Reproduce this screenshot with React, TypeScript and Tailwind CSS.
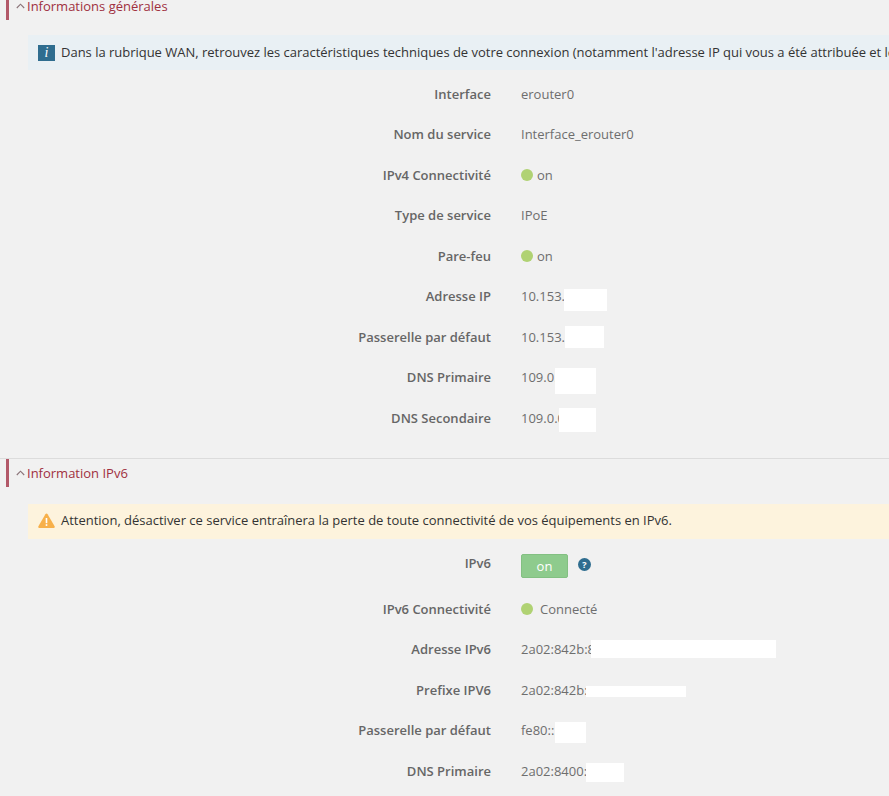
import React from "react";

type Mask = { left: number; width: number; top: number; height: number };

const Dot = () => <span className="inline-block w-3 h-3 rounded-full bg-[#b0d273]" />;

const SectionTitle = ({ title, className }: { title: string; className: string }) => (
  <div className={`flex items-center ml-1.5 border-l-[3px] border-[#b25868] pl-[7px] text-[13px] text-[#a0303f] ${className}`}>
    <svg width="9" height="6" viewBox="0 0 9 6" fill="none" stroke="#8a7378" strokeWidth="1.1" className="mr-[2px] -mt-[2px]">
      <path d="M0.8 5L4.5 1.2L8.2 5" />
    </svg>
    <span>{title}</span>
  </div>
);

const Row = ({
  label,
  value,
  mask,
  h = "h-[40.5px]",
  labelClass = "",
}: {
  label: string;
  value: React.ReactNode;
  mask?: Mask;
  h?: string;
  labelClass?: string;
}) => (
  <div className={`flex items-center ${h}`}>
    <div className={`w-[491px] shrink-0 text-right font-semibold text-[#666666] ${labelClass}`}>{label}</div>
    <div className="relative ml-[30px] text-[#6e6e6e] flex-1 self-stretch flex items-center">
      {value}
      {mask && (
        <div
          className="absolute bg-white"
          style={{ left: mask.left, width: mask.width, top: mask.top, height: mask.height }}
        />
      )}
    </div>
  </div>
);

const Status = ({ text, gap }: { text: string; gap: string }) => (
  <span className={`flex items-center ${gap}`}>
    <Dot />
    <span>{text}</span>
  </span>
);

export default function App() {
  return (
    <div className="w-[889px] h-[796px] overflow-hidden bg-[#f1f1f1] text-[13px] font-['Open_Sans',sans-serif]">
      <SectionTitle title="Informations générales" className="h-[20px] pb-[6px]" />

      <div className="ml-7 mt-[15px] h-[35px] w-[900px] bg-[#e9f0f4] flex items-center pl-[10px] whitespace-nowrap overflow-hidden text-[#333333]">
        <span className="w-[17px] h-[16px] mr-[6px] shrink-0 bg-[#2f6d8f] text-white flex items-center justify-center italic font-['Liberation_Serif',serif] text-[14px]">i</span>
        <span className="tracking-[-0.015px]">Dans la rubrique WAN, retrouvez les caractéristiques techniques de votre connexion (notamment l'adresse IP qui vous a été attribuée et les</span>
      </div>

      <div className="mt-[4px]">
        <Row label="Interface" value="erouter0" />
        <Row label="Nom du service" value="Interface_erouter0" />
        <Row label="IPv4 Connectivité" value={<Status text="on" gap="gap-[4px]" />} />
        <Row label="Type de service" value="IPoE" />
        <Row label="Pare-feu" value={<Status text="on" gap="gap-[4px]" />} />
        <Row label="Adresse IP" value="10.153.1" mask={{ left: 43, width: 43, top: 12, height: 22 }} />
        <Row label="Passerelle par défaut" value="10.153.1" mask={{ left: 44, width: 39, top: 9, height: 22 }} />
        <Row label="DNS Primaire" value="109.0.0.1" mask={{ left: 34, width: 41, top: 10, height: 26 }} />
        <Row label="DNS Secondaire" value="109.0.0.1" mask={{ left: 38, width: 37, top: 10, height: 24 }} />
      </div>

      <div className="mt-[19px] border-t border-[#dcdcdc]" />
      <SectionTitle title="Information IPv6" className="h-[28px] pt-[2px]" />

      <div className="ml-7 mt-[17px] h-[35px] w-[900px] bg-[#fdf3dd] flex items-center pl-[10px] whitespace-nowrap overflow-hidden text-[#333333]">
        <svg width="17" height="15" viewBox="0 0 17 15" className="mr-[6px] shrink-0 -mt-[2px]">
          <path d="M8.5 0.5C9 0.5 9.3 0.8 9.6 1.2L16.6 13.2C17 14 16.5 15 15.6 15H1.4C0.5 15 0 14 0.4 13.2L7.4 1.2C7.7 0.8 8 0.5 8.5 0.5Z" fill="#f7b04a" />
          <rect x="7.7" y="5" width="1.6" height="5.2" fill="#ffffff" />
          <rect x="7.7" y="11.2" width="1.6" height="1.7" fill="#ffffff" />
        </svg>
        <span className="tracking-[-0.008px]">Attention, désactiver ce service entraînera la perte de toute connectivité de vos équipements en IPv6.</span>
      </div>

      <div className="mt-[4px]">
        <Row
          h="h-[46.5px]"
          label="IPv6"
          labelClass="pb-[5px]"
          value={
            <span className="flex items-center gap-[10px] pt-[1px]">
              <span className="w-[47px] h-[24px] rounded-[2px] bg-[#8ecb8d] border border-[#83c082] text-white flex items-center justify-center">on</span>
              <span className="w-[13px] h-[13px] rounded-full bg-[#2f6d8f] text-white text-[9px] font-bold flex items-center justify-center -mt-[4px]">?</span>
            </span>
          }
        />
        <Row label="IPv6 Connectivité" value={<Status text="Connecté" gap="gap-[7px]" />} />
        <Row label="Adresse IPv6" value="2a02:842b:8" mask={{ left: 70, width: 185, top: 10, height: 18 }} />
        <Row label="Prefixe IPV6" value="2a02:842b:" mask={{ left: 65, width: 100, top: 16, height: 11 }} />
        <Row label="Passerelle par défaut" value="fe80::" mask={{ left: 34, width: 31, top: 11, height: 21 }} />
        <Row label="DNS Primaire" value="2a02:8400:" mask={{ left: 65, width: 38, top: 12, height: 19 }} />
      </div>
    </div>
  );
}
